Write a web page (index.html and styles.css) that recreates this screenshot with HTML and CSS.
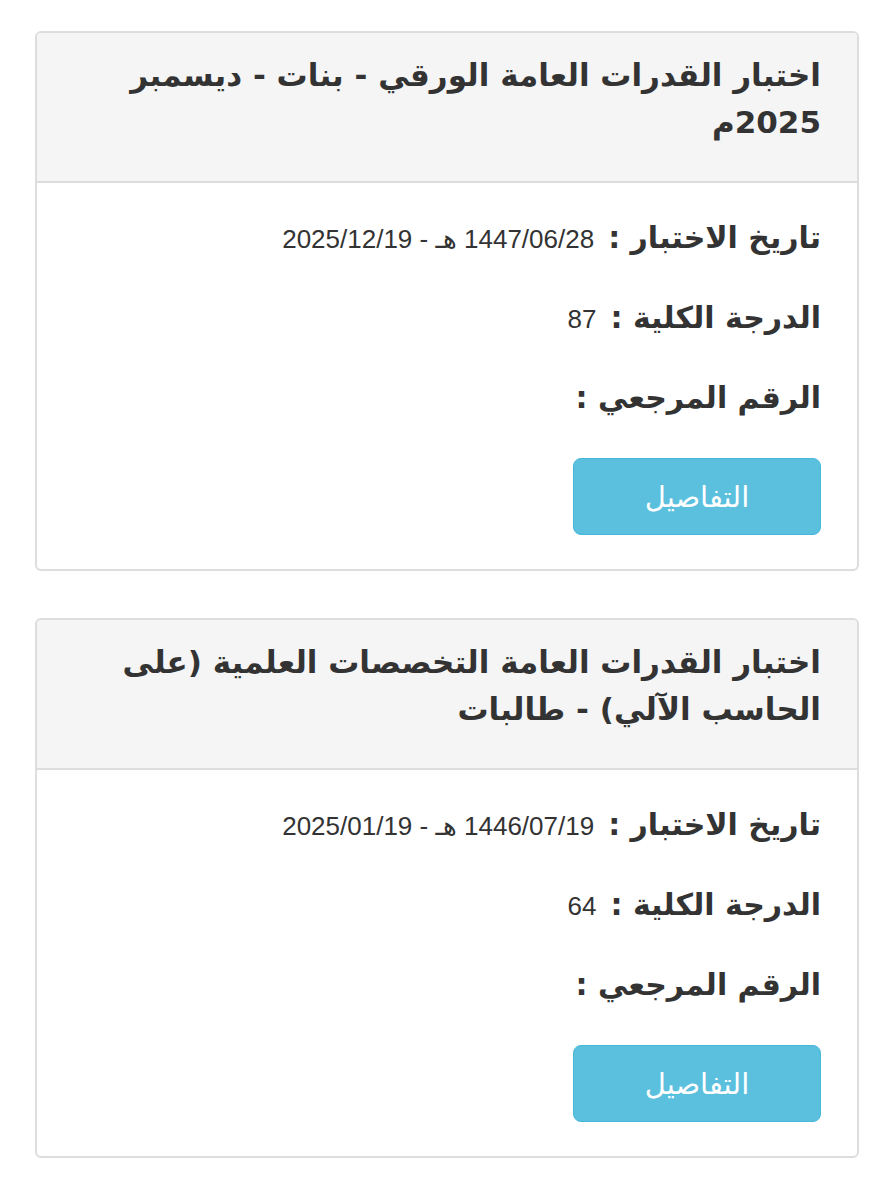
FILE: index.html
```html
<!DOCTYPE html>
<html lang="ar" dir="rtl">
  <head>
    <meta charset="UTF-8" />
    <meta name="viewport" content="width=device-width, initial-scale=1.0" />
    <title>نتائج الاختبارات</title>
    <link rel="stylesheet" href="styles.css">
  </head>

  <body>
    <!-- Result 1 -->
    <div class="panel">
      <div class="panel-heading">
        <h3 class="panel-title">اختبار القدرات العامة الورقي - بنات - ديسمبر 2025م</h3>
      </div>
      <div class="panel-body">
        <div class="info-row">
          <span class="info-label">تاريخ الاختبار :</span>
          <span class="info-value">1447/06/28 هـ - 2025/12/19</span>
        </div>
        <div class="info-row">
          <span class="info-label">الدرجة الكلية :</span>
          <span class="info-value">87</span>
        </div>
        <div class="info-row">
          <span class="info-label">الرقم المرجعي :</span>
          <span class="info-value"></span>
        </div>
        <a class="btn-details" href="#">التفاصيل</a>
      </div>
    </div>

    <!-- Result 2 -->
    <div class="panel">
      <div class="panel-heading">
        <h3 class="panel-title">اختبار القدرات العامة التخصصات العلمية (على الحاسب الآلي) - طالبات</h3>
      </div>
      <div class="panel-body">
        <div class="info-row">
          <span class="info-label">تاريخ الاختبار :</span>
          <span class="info-value">1446/07/19 هـ - 2025/01/19</span>
        </div>
        <div class="info-row">
          <span class="info-label">الدرجة الكلية :</span>
          <span class="info-value">64</span>
        </div>
        <div class="info-row">
          <span class="info-label">الرقم المرجعي :</span>
          <span class="info-value"></span>
        </div>
        <a class="btn-details" href="#">التفاصيل</a>
      </div>
    </div>
  </body>
</html>
```

FILE: styles.css
```css
body {
  margin: 0;
  padding: 31px 35px;
  background: #fff;
  color: #333;
  font-family: "DejaVu Sans", sans-serif;
}

.panel {
  border: 2px solid #ddd;
  border-radius: 6px;
  background: #fff;
  margin-bottom: 47px;
  overflow: hidden;
}

.panel-heading {
  background-color: #f5f5f5;
  border-bottom: 2px solid #ddd;
  padding: 19px 36px 35px;
}

.panel-title {
  margin: 0;
  font-size: 31px;
  line-height: 47px;
  font-weight: bold;
  color: #333;
}

.panel-body {
  padding: 35px 36px 34px;
}

.info-row {
  display: flex;
  align-items: baseline;
  gap: 14px;
  height: 40px;
  line-height: 40px;
  margin-bottom: 40px;
}

.info-label {
  font-size: 30px;
  font-weight: bold;
  color: #333;
}

.info-value {
  font-family: "Liberation Sans", "DejaVu Sans", sans-serif;
  font-size: 26px;
  color: #333;
}

.btn-details {
  display: flex;
  align-items: center;
  justify-content: center;
  width: 246px;
  height: 75px;
  background-color: #5bc0de;
  border: 1px solid #46b8da;
  border-radius: 8px;
  color: #fff;
  font-size: 29px;
  text-decoration: none;
}
```
